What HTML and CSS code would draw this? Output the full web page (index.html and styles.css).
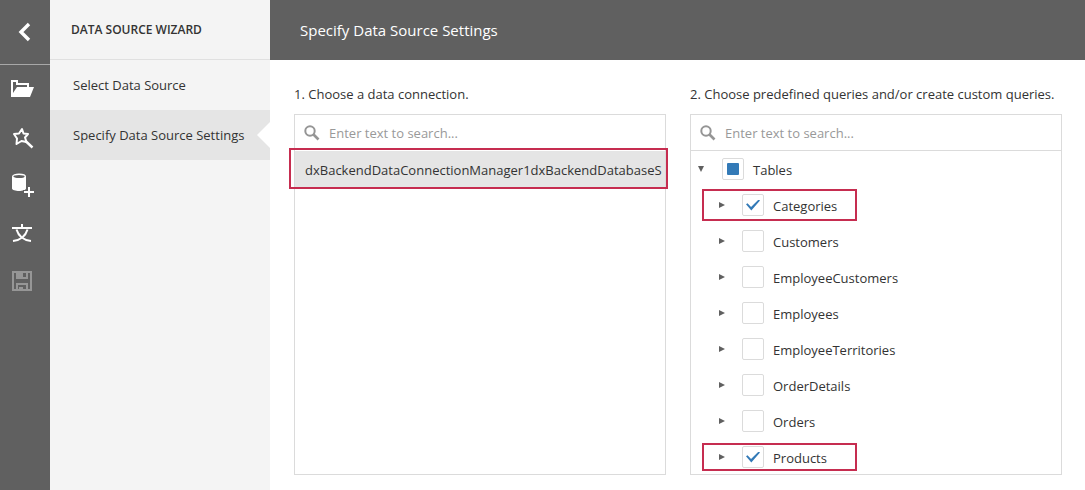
FILE: index.html
```
<!DOCTYPE html>
<html lang="en">

<head>
	<meta charset="utf-8">
	<title>Data Source Wizard</title>
	<link rel="stylesheet" href="styles.css">
</head>

<body>
	<div class="designer">
		<div class="toolbar">
			<button class="tool back" aria-label="Back">
				<svg width="24" height="24" viewBox="0 0 24 24"><path d="M16 4L8 12l8 8" fill="none" stroke="#fff" stroke-width="3.400" /></svg>
			</button>
			<button class="tool" aria-label="Open">
				<svg width="24" height="24" viewBox="0 0 24 24"><path d="M1 20V3h7v3h11v4h-2V8H6V5H3v11l4-6h17l-4 10z" fill="#fff" /></svg>
			</button>
			<button class="tool" aria-label="Run wizard">
				<svg width="24" height="24" viewBox="0 0 24 24" fill="none" stroke="#fff"><path d="M12 4l1.500 4.500 4.500.500-3 3.500 1.500 4.500-5-1-5 3 .5-5.500L4 9l5-.5z" stroke-width="2" stroke-linejoin="round" /><path d="M15.500 16l7 6.500" stroke-width="2.400" /></svg>
			</button>
			<button class="tool" aria-label="Add data source">
				<svg width="24" height="24" viewBox="0 0 24 24" fill="none" overflow="visible"><path d="M2 3.500v12c0 3.300 14 3.300 14 0v-12z" fill="#fff" /><ellipse cx="9" cy="3.500" rx="6.300" ry="2.200" fill="#606060" stroke="#fff" stroke-width="1.400" /><path d="M19 13v12M13 19h12" stroke="#606060" stroke-width="4" /><path d="M19 14v10M14 19h10" stroke="#fff" stroke-width="2" /></svg>
			</button>
			<button class="tool" aria-label="Localization">
				<svg width="24" height="24" viewBox="0 0 24 24" fill="none" stroke="#fff" stroke-width="2"><path d="M2 7h20M12 3v4M6.500 8.500c1.500 5 6 10.500 14.500 11.500M17.500 8.500c-1.500 5-6 10.500-14.500 11.500" /></svg>
			</button>
			<button class="tool" aria-label="Save" disabled>
				<svg width="24" height="24" viewBox="0 0 24 24" fill="none" stroke="#969696"><path d="M3 3h18v18H3z" stroke-width="2" /><path d="M7 21v-6h10v6M7 3v6h10V3" stroke-width="2" /><path d="M8 3h5v5H8zM9 18h4v3H9z" fill="#969696" stroke="none" /></svg>
			</button>
		</div>

		<div class="steps">
			<h1 class="steps-title">DATA SOURCE WIZARD</h1>
			<a class="step" href="#select">Select Data Source</a>
			<a class="step active" href="#settings" aria-current="step">Specify Data Source Settings</a>
		</div>

		<div class="page">
			<h2 class="page-title">Specify Data Source Settings</h2>
			<div class="columns">
				<div class="column">
					<label class="caption" for="search-connection">1. Choose a data connection.</label>
					<div class="box">
						<div class="search">
							<svg width="16" height="16" viewBox="0 0 16 16" fill="none" stroke="#959595"><circle cx="6" cy="6" r="4.700" stroke-width="2" /><path d="M9.500 9.500l5 5" stroke-width="2.600" /></svg>
							<input id="search-connection" type="text" placeholder="Enter text to search...">
						</div>
						<ul class="list">
							<li class="connection"><button class="connection-name">dxBackendDataConnectionManager1dxBackendDatabaseS</button></li>
						</ul>
					</div>
				</div>

				<div class="column">
					<label class="caption" for="search-query">2. Choose predefined queries and/or create custom queries.</label>
					<div class="box">
						<div class="search lined">
							<svg width="16" height="16" viewBox="0 0 16 16" fill="none" stroke="#959595"><circle cx="6" cy="6" r="4.700" stroke-width="2" /><path d="M9.500 9.500l5 5" stroke-width="2.600" /></svg>
							<input id="search-query" type="text" placeholder="Enter text to search...">
						</div>
						<ul class="list tree">
							<li class="node root"><button class="toggle open" aria-label="Collapse Tables"></button><input class="check" type="checkbox" id="tables"><label for="tables">Tables</label></li>
							<li class="node marked"><button class="toggle" aria-label="Expand Categories"></button><input class="check" type="checkbox" id="categories" checked><label for="categories">Categories</label></li>
							<li class="node"><button class="toggle" aria-label="Expand Customers"></button><input class="check" type="checkbox" id="customers"><label for="customers">Customers</label></li>
							<li class="node"><button class="toggle" aria-label="Expand EmployeeCustomers"></button><input class="check" type="checkbox" id="employee-customers"><label for="employee-customers">EmployeeCustomers</label></li>
							<li class="node"><button class="toggle" aria-label="Expand Employees"></button><input class="check" type="checkbox" id="employees"><label for="employees">Employees</label></li>
							<li class="node"><button class="toggle" aria-label="Expand EmployeeTerritories"></button><input class="check" type="checkbox" id="employee-territories"><label for="employee-territories">EmployeeTerritories</label></li>
							<li class="node"><button class="toggle" aria-label="Expand OrderDetails"></button><input class="check" type="checkbox" id="order-details"><label for="order-details">OrderDetails</label></li>
							<li class="node"><button class="toggle" aria-label="Expand Orders"></button><input class="check" type="checkbox" id="orders"><label for="orders">Orders</label></li>
							<li class="node marked last"><button class="toggle" aria-label="Expand Products"></button><input class="check" type="checkbox" id="products" checked><label for="products">Products</label></li>
						</ul>
					</div>
				</div>
			</div>
		</div>
	</div>

	<script>
		document.getElementById('tables').indeterminate = true;
	</script>
</body>

</html>
```
FILE: styles.css
```
*,
*::after {
	box-sizing: border-box;
}

body {
	margin: 0;
	background-color: #fff;
	color: #333;
	font: 13px/20px "Open Sans", "Noto Sans", sans-serif;
}

button,
input {
	margin: 0;
	padding: 0;
	border: none;
	background: none;
	color: inherit;
	font: inherit;
}

button {
	cursor: pointer;
}

.designer {
	display: flex;
	min-height: 100vh;
}

.toolbar {
	display: flex;
	flex-direction: column;
	flex: none;
	width: 50px;
	background-color: #606060;
}

.tool {
	display: flex;
	align-items: center;
	height: 48px;
	padding-left: 10px;
}

.back {
	height: 65px;
	padding-left: 13px;
	border-bottom: 1px solid #a8a8a8;
}

.steps {
	flex: none;
	width: 220px;
	background-color: #f4f4f4;
}

.steps-title {
	margin: 0;
	padding: 20px 21px 19px;
	border-bottom: 1px solid #e0e0e0;
	font-size: 12px;
	line-height: 20px;
	font-weight: 600;
}

.step {
	display: block;
	position: relative;
	padding: 15px 0 15px 23px;
	color: #333;
	text-decoration: none;
	white-space: nowrap;
}

.step.active {
	background-color: #e5e5e5;
}

.step.active::after {
	content: "";
	position: absolute;
	top: 12px;
	right: 0;
	border: 13px solid transparent;
	border-right-color: #fff;
	border-left: none;
}

.page {
	display: flex;
	flex-direction: column;
	flex: 1;
	min-width: 0;
}

.page-title {
	margin: 0;
	padding: 20px 30px;
	background-color: #606060;
	color: #fff;
	font-size: 15px;
	line-height: 20px;
	font-weight: 400;
}

.columns {
	display: grid;
	grid-template-columns: minmax(0, 1fr) minmax(0, 1fr);
	gap: 24px;
	flex: 1;
	padding: 24px 23px 15px 24px;
}

.column {
	display: flex;
	flex-direction: column;
}

.caption {
	margin-bottom: 10px;
	white-space: nowrap;
}

.box {
	flex: 1;
	border: 1px solid #dbdbdb;
}

.search {
	display: flex;
	align-items: center;
	gap: 9px;
	height: 36px;
	padding-left: 9px;
}

.search.lined {
	border-bottom: 1px solid #dbdbdb;
}

.search input {
	flex: 1;
	min-width: 0;
	height: 34px;
	outline: none;
}

.search input::placeholder {
	color: #999;
	opacity: 1;
}

.list {
	margin: 0;
	padding: 0;
	list-style: none;
}

.connection {
	position: relative;
	background-color: #e5e5e5;
}

.connection-name {
	display: block;
	width: 100%;
	height: 38px;
	padding-left: 10px;
	overflow: hidden;
	text-align: left;
	white-space: nowrap;
}

/* red frames around the selected items */
.connection::after,
.marked::after {
	content: "";
	position: absolute;
	border: 2px solid #c62d50;
	pointer-events: none;
}

.connection::after {
	top: -3px;
	right: -3px;
	bottom: 0;
	left: -6px;
}

.marked::after {
	top: 2px;
	left: 11px;
	width: 155px;
	height: 32px;
}

.marked.last::after {
	top: 4px;
	height: 28px;
}

.tree {
	height: 323px;
	overflow-y: auto;
	scrollbar-width: none;
}

.node {
	display: flex;
	align-items: center;
	position: relative;
	height: 36px;
	padding-left: 21px;
}

.node.root {
	padding-left: 0;
}

.node label {
	padding: 2px 0 0 9px;
}

.toggle {
	display: flex;
	align-items: center;
	justify-content: center;
	width: 20px;
	height: 20px;
	margin-right: 10px;
}

.root .toggle {
	margin-right: 11px;
}

.toggle::before {
	content: "";
	border: 3px solid transparent;
	border-left: 6px solid #606060;
	border-right: none;
}

.toggle.open::before {
	border: 3px solid transparent;
	border-top: 6px solid #606060;
	border-bottom: none;
}

.check {
	display: grid;
	place-items: center;
	appearance: none;
	width: 22px;
	height: 22px;
	border: 1px solid #dbdbdb;
	border-radius: 2px;
	background-color: #fff;
}

.check:indeterminate::before {
	content: "";
	width: 12px;
	height: 12px;
	border-radius: 1px;
	background-color: #337ab7;
}

.check:checked::before {
	content: "";
	width: 14px;
	height: 11px;
	background-color: #337ab7;
	clip-path: polygon(0 44%, 11% 34%, 36% 68%, 90% 0, 100% 10%, 38% 100%);
}
```
